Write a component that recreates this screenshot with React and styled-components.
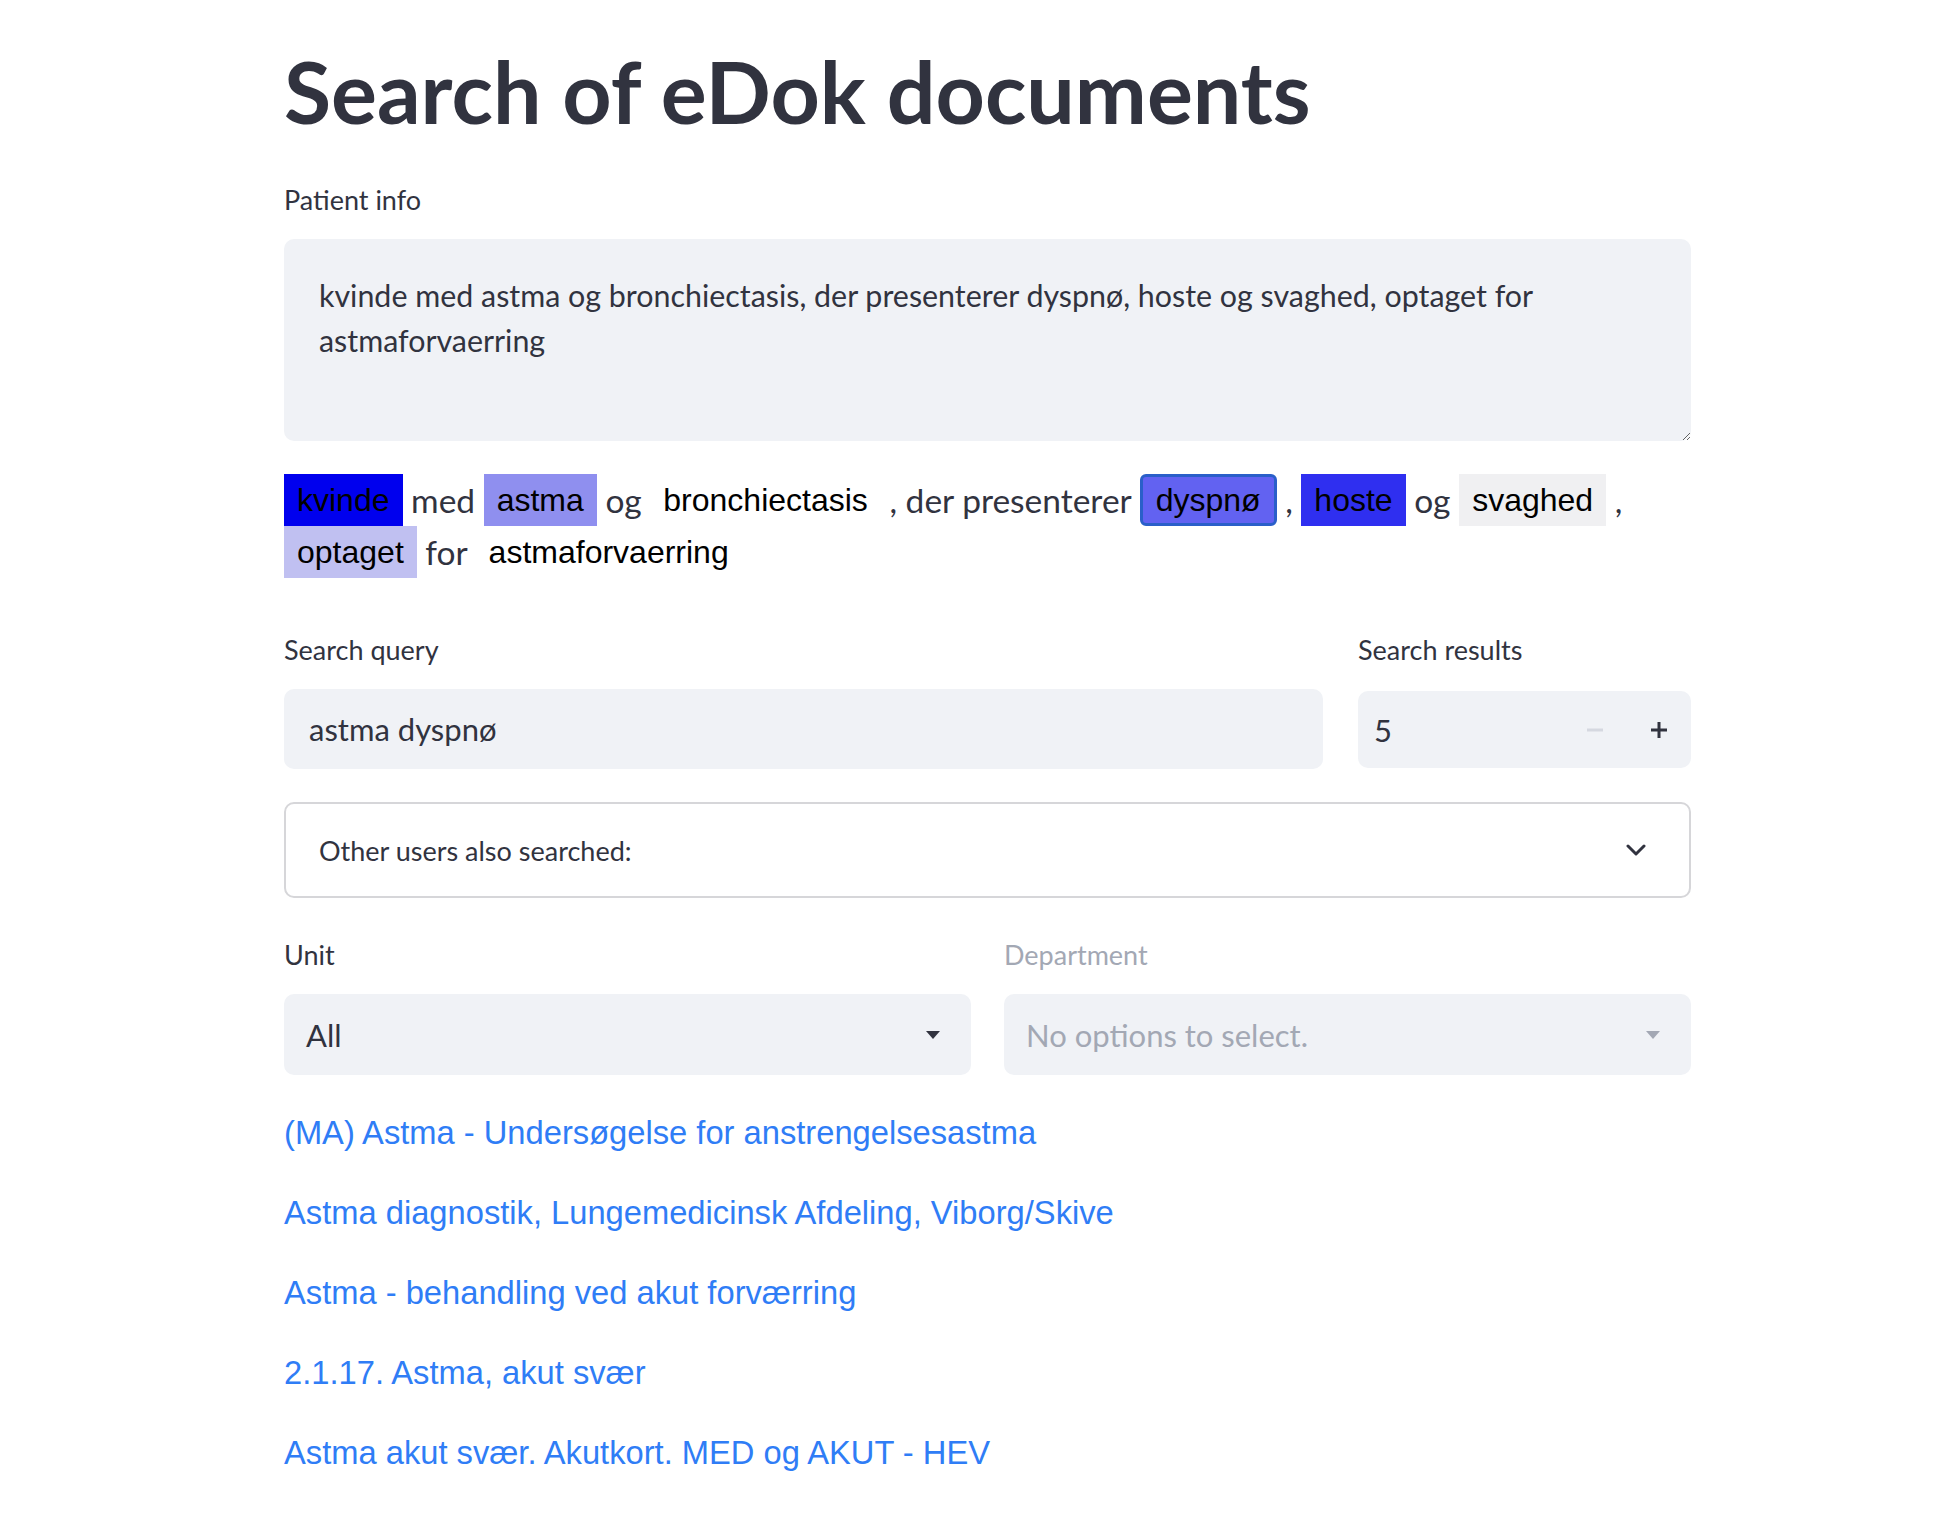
import React from "react";
import styled, { createGlobalStyle } from "styled-components";

const GlobalStyle = createGlobalStyle`
  body {
    margin: 0;
    background: #ffffff;
    font-family: Lato, "Open Sans", sans-serif;
    color: #31333f;
  }
`;

const tokens = [
  { text: "kvinde", bg: "#0000ee" },
  { text: "med" },
  { text: "astma", bg: "#8f8fef" },
  { text: "og" },
  { text: "bronchiectasis", bg: "#ffffff" },
  { text: ", der presenterer" },
  { text: "dyspnø", bg: "#6262f1", focused: true },
  { text: "," },
  { text: "hoste", bg: "#2f2ff0" },
  { text: "og" },
  { text: "svaghed", bg: "#f0f0f2" },
  { text: "," },
  { br: true },
  { text: "optaget", bg: "#c0c0f1" },
  { text: "for" },
  { text: "astmaforvaerring", bg: "#ffffff" },
];

const results = [
  "(MA) Astma - Undersøgelse for anstrengelsesastma",
  "Astma diagnostik, Lungemedicinsk Afdeling, Viborg/Skive",
  "Astma - behandling ved akut forværring",
  "2.1.17. Astma, akut svær",
  "Astma akut svær. Akutkort. MED og AKUT - HEV",
];

function Caret({ color }) {
  return (
    <svg width="16" height="10" viewBox="0 0 16 10">
      <path d="M1 1h14L8 9z" fill={color} />
    </svg>
  );
}

export default function App() {
  return (
    <Page>
      <GlobalStyle />
      <Title>Search of eDok documents</Title>

      <Label>Patient info</Label>
      <TextArea
        readOnly
        defaultValue="kvinde med astma og bronchiectasis, der presenterer dyspnø, hoste og svaghed, optaget for astmaforvaerring"
      />

      <Annotated>
        {tokens.map((t, i) =>
          t.br ? (
            <br key={i} />
          ) : t.bg ? (
            <React.Fragment key={i}>
              <Mark bg={t.bg} focused={t.focused}>
                {t.text}
              </Mark>{" "}
            </React.Fragment>
          ) : (
            <React.Fragment key={i}>
              <Plain>{t.text}</Plain>{" "}
            </React.Fragment>
          )
        )}
      </Annotated>

      <SearchRow>
        <Field>
          <Label tight>Search query</Label>
          <Input>astma dyspnø</Input>
        </Field>
        <Field>
          <Label tight>Search results</Label>
          <NumberBox>
            <NumberValue>5</NumberValue>
            <StepButton disabled>
              <svg width="16" height="4" viewBox="0 0 16 4">
                <rect width="16" height="3" y="0.5" fill="#d5d8e0" />
              </svg>
            </StepButton>
            <StepButton>
              <svg width="16" height="16" viewBox="0 0 16 16">
                <rect x="6.5" width="3" height="16" fill="#31333f" />
                <rect y="6.5" width="16" height="3" fill="#31333f" />
              </svg>
            </StepButton>
          </NumberBox>
        </Field>
      </SearchRow>

      <Expander>
        <span>Other users also searched:</span>
        <svg width="20" height="12" viewBox="0 0 20 12">
          <path
            d="M2 2l8 8 8-8"
            fill="none"
            stroke="#31333f"
            strokeWidth="3"
            strokeLinecap="round"
            strokeLinejoin="round"
          />
        </svg>
      </Expander>

      <SelectRow>
        <Field>
          <Label tight>Unit</Label>
          <Select>
            <span>All</span>
            <Caret color="#31333f" />
          </Select>
        </Field>
        <Field>
          <Label tight disabled>
            Department
          </Label>
          <Select disabled>
            <span>No options to select.</span>
            <Caret color="#a3a8b4" />
          </Select>
        </Field>
      </SelectRow>

      <Results>
        {results.map((r) => (
          <ResultLink key={r} href="#">
            {r}
          </ResultLink>
        ))}
      </Results>
    </Page>
  );
}

const Page = styled.main`
  display: flex;
  flex-direction: column;
  width: 1407px;
  padding: 39px 0 40px 284px;
`;

const Title = styled.h1`
  margin: 0;
  font-size: 86px;
  font-weight: 700;
  line-height: 103px;
  color: #31333f;
`;

const Label = styled.label`
  display: block;
  font-size: 27px;
  line-height: 36px;
  margin: ${(p) => (p.tight ? "0 0 21px" : "40px 0 21px")};
  color: ${(p) => (p.disabled ? "#a3a8b4" : "#31333f")};
`;

const TextArea = styled.textarea`
  box-sizing: border-box;
  width: 100%;
  height: 202px;
  margin: 0;
  padding: 34px 35px;
  border: none;
  border-radius: 10px;
  outline: none;
  background: #f0f2f6;
  color: #31333f;
  font-family: Lato, "Open Sans", sans-serif;
  font-size: 30.4px;
  line-height: 45px;
  resize: vertical;
`;

const Annotated = styled.div`
  margin-top: 33px;
  line-height: 52px;
  font-size: 33.5px;
`;

const Plain = styled.span`
  color: #31333f;
`;

const Mark = styled.span`
  display: inline-block;
  box-sizing: border-box;
  height: 52px;
  padding: 0 13px;
  background: ${(p) => p.bg};
  color: #000000;
  font-family: "Liberation Sans", Arial, sans-serif;
  font-size: 32px;
  vertical-align: top;
  border: ${(p) => (p.focused ? "3px solid #2a5fc9" : "none")};
  border-radius: ${(p) => (p.focused ? "6px" : "0")};
  line-height: ${(p) => (p.focused ? "46px" : "52px")};
`;

const SearchRow = styled.div`
  display: grid;
  grid-template-columns: 1039px 333px;
  column-gap: 35px;
  margin-top: 54px;
`;

const Field = styled.div`
  display: flex;
  flex-direction: column;
`;

const Input = styled.div`
  box-sizing: border-box;
  height: 80px;
  display: flex;
  align-items: center;
  padding: 0 25px;
  background: #f0f2f6;
  border-radius: 10px;
  font-size: 31px;
`;

const NumberBox = styled.div`
  box-sizing: border-box;
  height: 77px;
  margin-top: 2px;
  display: flex;
  align-items: center;
  background: #f0f2f6;
  border-radius: 10px;
  padding-left: 16px;
`;

const NumberValue = styled.span`
  flex: 1;
  font-size: 31px;
`;

const StepButton = styled.button`
  width: 64px;
  height: 100%;
  display: flex;
  align-items: center;
  justify-content: center;
  padding: 0;
  border: none;
  background: transparent;
`;

const Expander = styled.div`
  box-sizing: border-box;
  height: 96px;
  margin-top: 33px;
  display: flex;
  align-items: center;
  justify-content: space-between;
  padding: 0 43px 0 33px;
  border: 2px solid #d6d6d9;
  border-radius: 10px;
  font-size: 27px;
`;

const SelectRow = styled.div`
  display: grid;
  grid-template-columns: 1fr 1fr;
  column-gap: 33px;
  margin-top: 39px;
`;

const Select = styled.div`
  box-sizing: border-box;
  height: 81px;
  display: flex;
  align-items: center;
  justify-content: space-between;
  padding: 0 30px 0 22px;
  background: #f0f2f6;
  border-radius: 10px;
  font-size: 31px;
  color: ${(p) => (p.disabled ? "#a3a8b4" : "#31333f")};
`;

const Results = styled.div`
  display: flex;
  flex-direction: column;
  align-items: flex-start;
  gap: 32px;
  margin-top: 34px;
`;

const ResultLink = styled.a`
  font-family: "Liberation Sans", Arial, sans-serif;
  font-size: 32.7px;
  line-height: 48px;
  color: #2f7df6;
  text-decoration: none;
`;
